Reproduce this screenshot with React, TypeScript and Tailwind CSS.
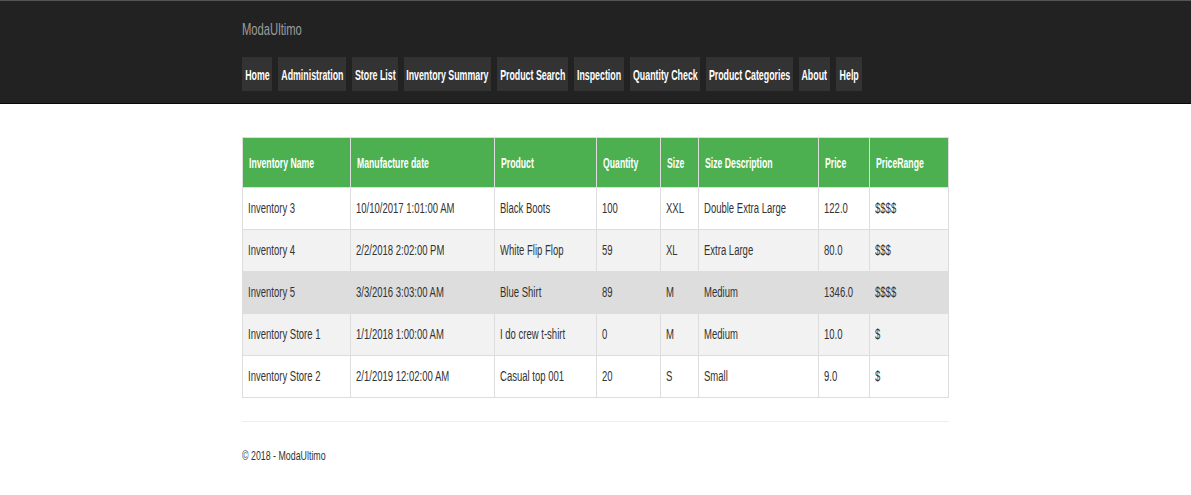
import React from "react";

const nav: [string, number][] = [
  ["Home", 30],
  ["Administration", 68],
  ["Store List", 46],
  ["Inventory Summary", 87],
  ["Product Search", 71],
  ["Inspection", 50],
  ["Quantity Check", 70],
  ["Product Categories", 87],
  ["About", 31],
  ["Help", 26],
];

const cols = [
  { h: "Inventory Name", w: 108 },
  { h: "Manufacture date", w: 144 },
  { h: "Product", w: 102 },
  { h: "Quantity", w: 64 },
  { h: "Size", w: 38 },
  { h: "Size Description", w: 120 },
  { h: "Price", w: 51 },
  { h: "PriceRange", w: 79 },
];

const rows = [
  ["Inventory 3", "10/10/2017 1:01:00 AM", "Black Boots", "100", "XXL", "Double Extra Large", "122.0", "$$$$"],
  ["Inventory 4", "2/2/2018 2:02:00 PM", "White Flip Flop", "59", "XL", "Extra Large", "80.0", "$$$"],
  ["Inventory 5", "3/3/2016 3:03:00 AM", "Blue Shirt", "89", "M", "Medium", "1346.0", "$$$$"],
  ["Inventory Store 1", "1/1/2018 1:00:00 AM", "I do crew t-shirt", "0", "M", "Medium", "10.0", "$"],
  ["Inventory Store 2", "2/1/2019 12:02:00 AM", "Casual top 001", "20", "S", "Small", "9.0", "$"],
];

const rowBg = ["bg-white", "bg-[#f2f2f2]", "bg-[#dddddd]", "bg-[#f2f2f2]", "bg-white"];

export default function App() {
  return (
    <div className="min-h-[495px] bg-white font-['Liberation_Sans',sans-serif]">
      <div className="h-[104px] bg-[#222222] border-t border-[#555] border-b border-b-[#080808]">
        <div className="w-[706px] ml-[242px] flex flex-col">
          <div className="h-[56px] flex items-center text-[17px] text-[#9d9d9d] pt-[2px]">
            <span className="inline-block origin-left scale-x-[0.66] whitespace-nowrap">ModaUltimo</span>
          </div>
          <div className="flex gap-[6px]">
            {nav.map(([n, w]) => (
              <div
                key={n}
                style={{ width: w }}
                className="h-[34px] pt-[2px] bg-[#333333] flex items-center justify-center text-white text-[14px] font-bold"
              >
                <span className="inline-block scale-x-[0.63] whitespace-nowrap">{n}</span>
              </div>
            ))}
          </div>
        </div>
      </div>
      <div className="w-[707px] ml-[242px] pt-[33px]">
        <table className="table-fixed border-collapse w-[707px] text-[14px] text-[#333]">
          <colgroup>
            {cols.map((c) => (
              <col key={c.h} style={{ width: c.w }} />
            ))}
          </colgroup>
          <thead>
            <tr className="bg-[#4caf50] h-[50px]">
              {cols.map((c) => (
                <th
                  key={c.h}
                  className="border border-[#ddd] text-left px-[6px] pt-[1px] text-white text-[14px] font-bold whitespace-nowrap"
                >
                  <span className="inline-block origin-left scale-x-[0.62]">{c.h}</span>
                </th>
              ))}
            </tr>
          </thead>
          <tbody>
            {rows.map((r, i) => (
              <tr key={i} className={`${rowBg[i]} h-[42px]`}>
                {r.map((v, j) => (
                  <td key={j} className="border border-[#ddd] px-[5px] whitespace-nowrap">
                    <span className="inline-block origin-left scale-x-[0.68]">{v}</span>
                  </td>
                ))}
              </tr>
            ))}
          </tbody>
        </table>
        <div className="mt-[23px] border-t border-[#eeeeee]" />
        <div className="pt-[24px] text-[13px] text-[#333]">
          <span className="inline-block origin-left scale-x-[0.68] whitespace-nowrap">© 2018 - ModaUltimo</span>
        </div>
      </div>
    </div>
  );
}
